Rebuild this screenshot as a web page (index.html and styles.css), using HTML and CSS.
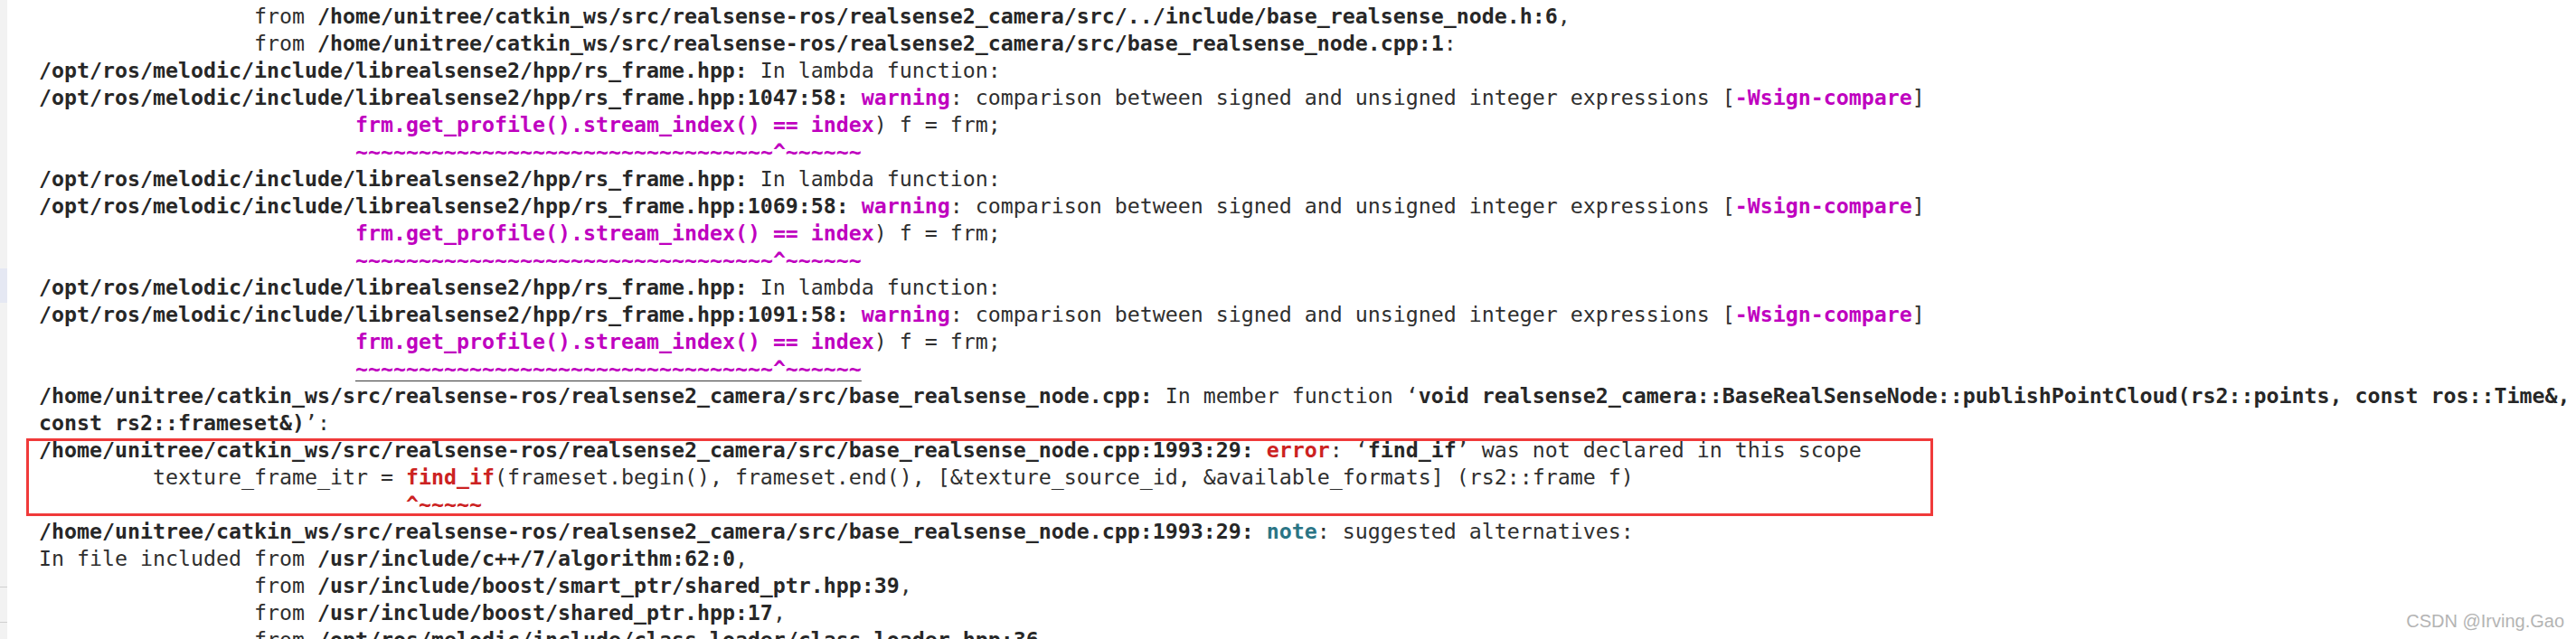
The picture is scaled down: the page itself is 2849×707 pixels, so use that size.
FILE: index.html
```html
<!DOCTYPE html>
<html>
<head>
<meta charset="utf-8">
<link rel="stylesheet" href="styles.css">
</head>
<body>
<div class="page">
  <div class="strip">
    <div class="strip-gap1"></div>
    <div class="strip-sel"></div>
    <div class="strip-gap2"></div>
    <div class="strip-rule"></div>
    <div class="strip-gap3"></div>
    <div class="strip-rule"></div>
  </div>
  <div class="console">
    <div class="ln">                 from <span class="b">/home/unitree/catkin_ws/src/realsense-ros/realsense2_camera/src/../include/base_realsense_node.h:6</span>,</div>
    <div class="ln">                 from <span class="b">/home/unitree/catkin_ws/src/realsense-ros/realsense2_camera/src/base_realsense_node.cpp:1</span>:</div>
    <div class="ln"><span class="b">/opt/ros/melodic/include/librealsense2/hpp/rs_frame.hpp:</span> In lambda function:</div>
    <div class="ln"><span class="b">/opt/ros/melodic/include/librealsense2/hpp/rs_frame.hpp:1047:58:</span> <span class="m">warning</span>: comparison between signed and unsigned integer expressions [<span class="m">-Wsign-compare</span>]</div>
    <div class="ln">                         <span class="m">frm.get_profile().stream_index() == index</span>) f = frm;</div>
    <div class="ln">                         <span class="m">~~~~~~~~~~~~~~~~~~~~~~~~~~~~~~~~~^~~~~~~</span></div>
    <div class="ln"><span class="b">/opt/ros/melodic/include/librealsense2/hpp/rs_frame.hpp:</span> In lambda function:</div>
    <div class="ln"><span class="b">/opt/ros/melodic/include/librealsense2/hpp/rs_frame.hpp:1069:58:</span> <span class="m">warning</span>: comparison between signed and unsigned integer expressions [<span class="m">-Wsign-compare</span>]</div>
    <div class="ln">                         <span class="m">frm.get_profile().stream_index() == index</span>) f = frm;</div>
    <div class="ln">                         <span class="m">~~~~~~~~~~~~~~~~~~~~~~~~~~~~~~~~~^~~~~~~</span></div>
    <div class="ln"><span class="b">/opt/ros/melodic/include/librealsense2/hpp/rs_frame.hpp:</span> In lambda function:</div>
    <div class="ln"><span class="b">/opt/ros/melodic/include/librealsense2/hpp/rs_frame.hpp:1091:58:</span> <span class="m">warning</span>: comparison between signed and unsigned integer expressions [<span class="m">-Wsign-compare</span>]</div>
    <div class="ln">                         <span class="m">frm.get_profile().stream_index() == index</span>) f = frm;</div>
    <div class="ln">                         <span class="m ul">~~~~~~~~~~~~~~~~~~~~~~~~~~~~~~~~~^~~~~~~</span></div>
    <div class="ln"><span class="b">/home/unitree/catkin_ws/src/realsense-ros/realsense2_camera/src/base_realsense_node.cpp:</span> In member function ‘<span class="b">void realsense2_camera::BaseRealSenseNode::publishPointCloud(rs2::points, const ros::Time&amp;,</span></div>
    <div class="ln"><span class="b">const rs2::frameset&amp;)</span>’:</div>
    <div class="boxed">
      <div class="ln"><span class="b">/home/unitree/catkin_ws/src/realsense-ros/realsense2_camera/src/base_realsense_node.cpp:1993:29:</span> <span class="r">error</span>: ‘<span class="b">find_if</span>’ was not declared in this scope</div>
      <div class="ln">         texture_frame_itr = <span class="r">find_if</span>(frameset.begin(), frameset.end(), [&amp;texture_source_id, &amp;available_formats] (rs2::frame f)</div>
      <div class="ln">                             <span class="r">^~~~~~</span></div>
    </div>
    <div class="ln"><span class="b">/home/unitree/catkin_ws/src/realsense-ros/realsense2_camera/src/base_realsense_node.cpp:1993:29:</span> <span class="c">note</span>: suggested alternatives:</div>
    <div class="ln">In file included from <span class="b">/usr/include/c++/7/algorithm:62:0</span>,</div>
    <div class="ln">                 from <span class="b">/usr/include/boost/smart_ptr/shared_ptr.hpp:39</span>,</div>
    <div class="ln">                 from <span class="b">/usr/include/boost/shared_ptr.hpp:17</span>,</div>
    <div class="ln">                 from <span class="b">/opt/ros/melodic/include/class_loader/class_loader.hpp:36</span>,</div>
    <div class="watermark">CSDN @Irving.Gao</div>
  </div>
</div>
</body>
</html>
```

FILE: styles.css
```css
html, body {
  margin: 0;
  padding: 0;
  background: #ffffff;
}

body {
  width: 2849px;
  height: 707px;
  overflow: hidden;
}

.page {
  display: flex;
  height: 707px;
  position: relative;
}

.strip {
  width: 8px;
  flex: 0 0 8px;
  background: #f2f2f2;
  display: flex;
  flex-direction: column;
}

.strip-gap1 { height: 297px; }
.strip-sel { height: 38px; background: #e5e8f3; }
.strip-gap2 { height: 314px; }
.strip-gap3 { height: 38px; }
.strip-rule { height: 1px; background: #cfcfcf; }

.console {
  flex: 1;
  padding: 3px 0 0 35px;
  font-family: "DejaVu Sans Mono", "Liberation Mono", monospace;
  font-size: 23.254px;
  line-height: 30px;
  color: #2f2f2f;
  position: relative;
}

.ln {
  white-space: pre;
  height: 30px;
}

.b {
  font-weight: bold;
  color: #272727;
}

.m {
  font-weight: bold;
  color: #bf00bf;
}

.r {
  font-weight: bold;
  color: #cc2222;
}

.c {
  font-weight: bold;
  color: #2a7585;
}

.ul {
  text-decoration: underline;
  text-decoration-color: #3a3a3a;
  text-decoration-thickness: 1px;
  text-underline-offset: 5px;
}

.boxed {
  position: relative;
}

.boxed::before {
  content: "";
  position: absolute;
  left: -14px;
  top: 2px;
  width: 2109px;
  height: 86px;
  border: 3px solid #f03a3a;
  box-sizing: border-box;
  pointer-events: none;
}

.watermark {
  position: absolute;
  right: 13px;
  bottom: 8px;
  font-family: "Liberation Sans", Arial, sans-serif;
  font-size: 20px;
  line-height: 24px;
  color: #b4b4b4;
  white-space: nowrap;
}
```
